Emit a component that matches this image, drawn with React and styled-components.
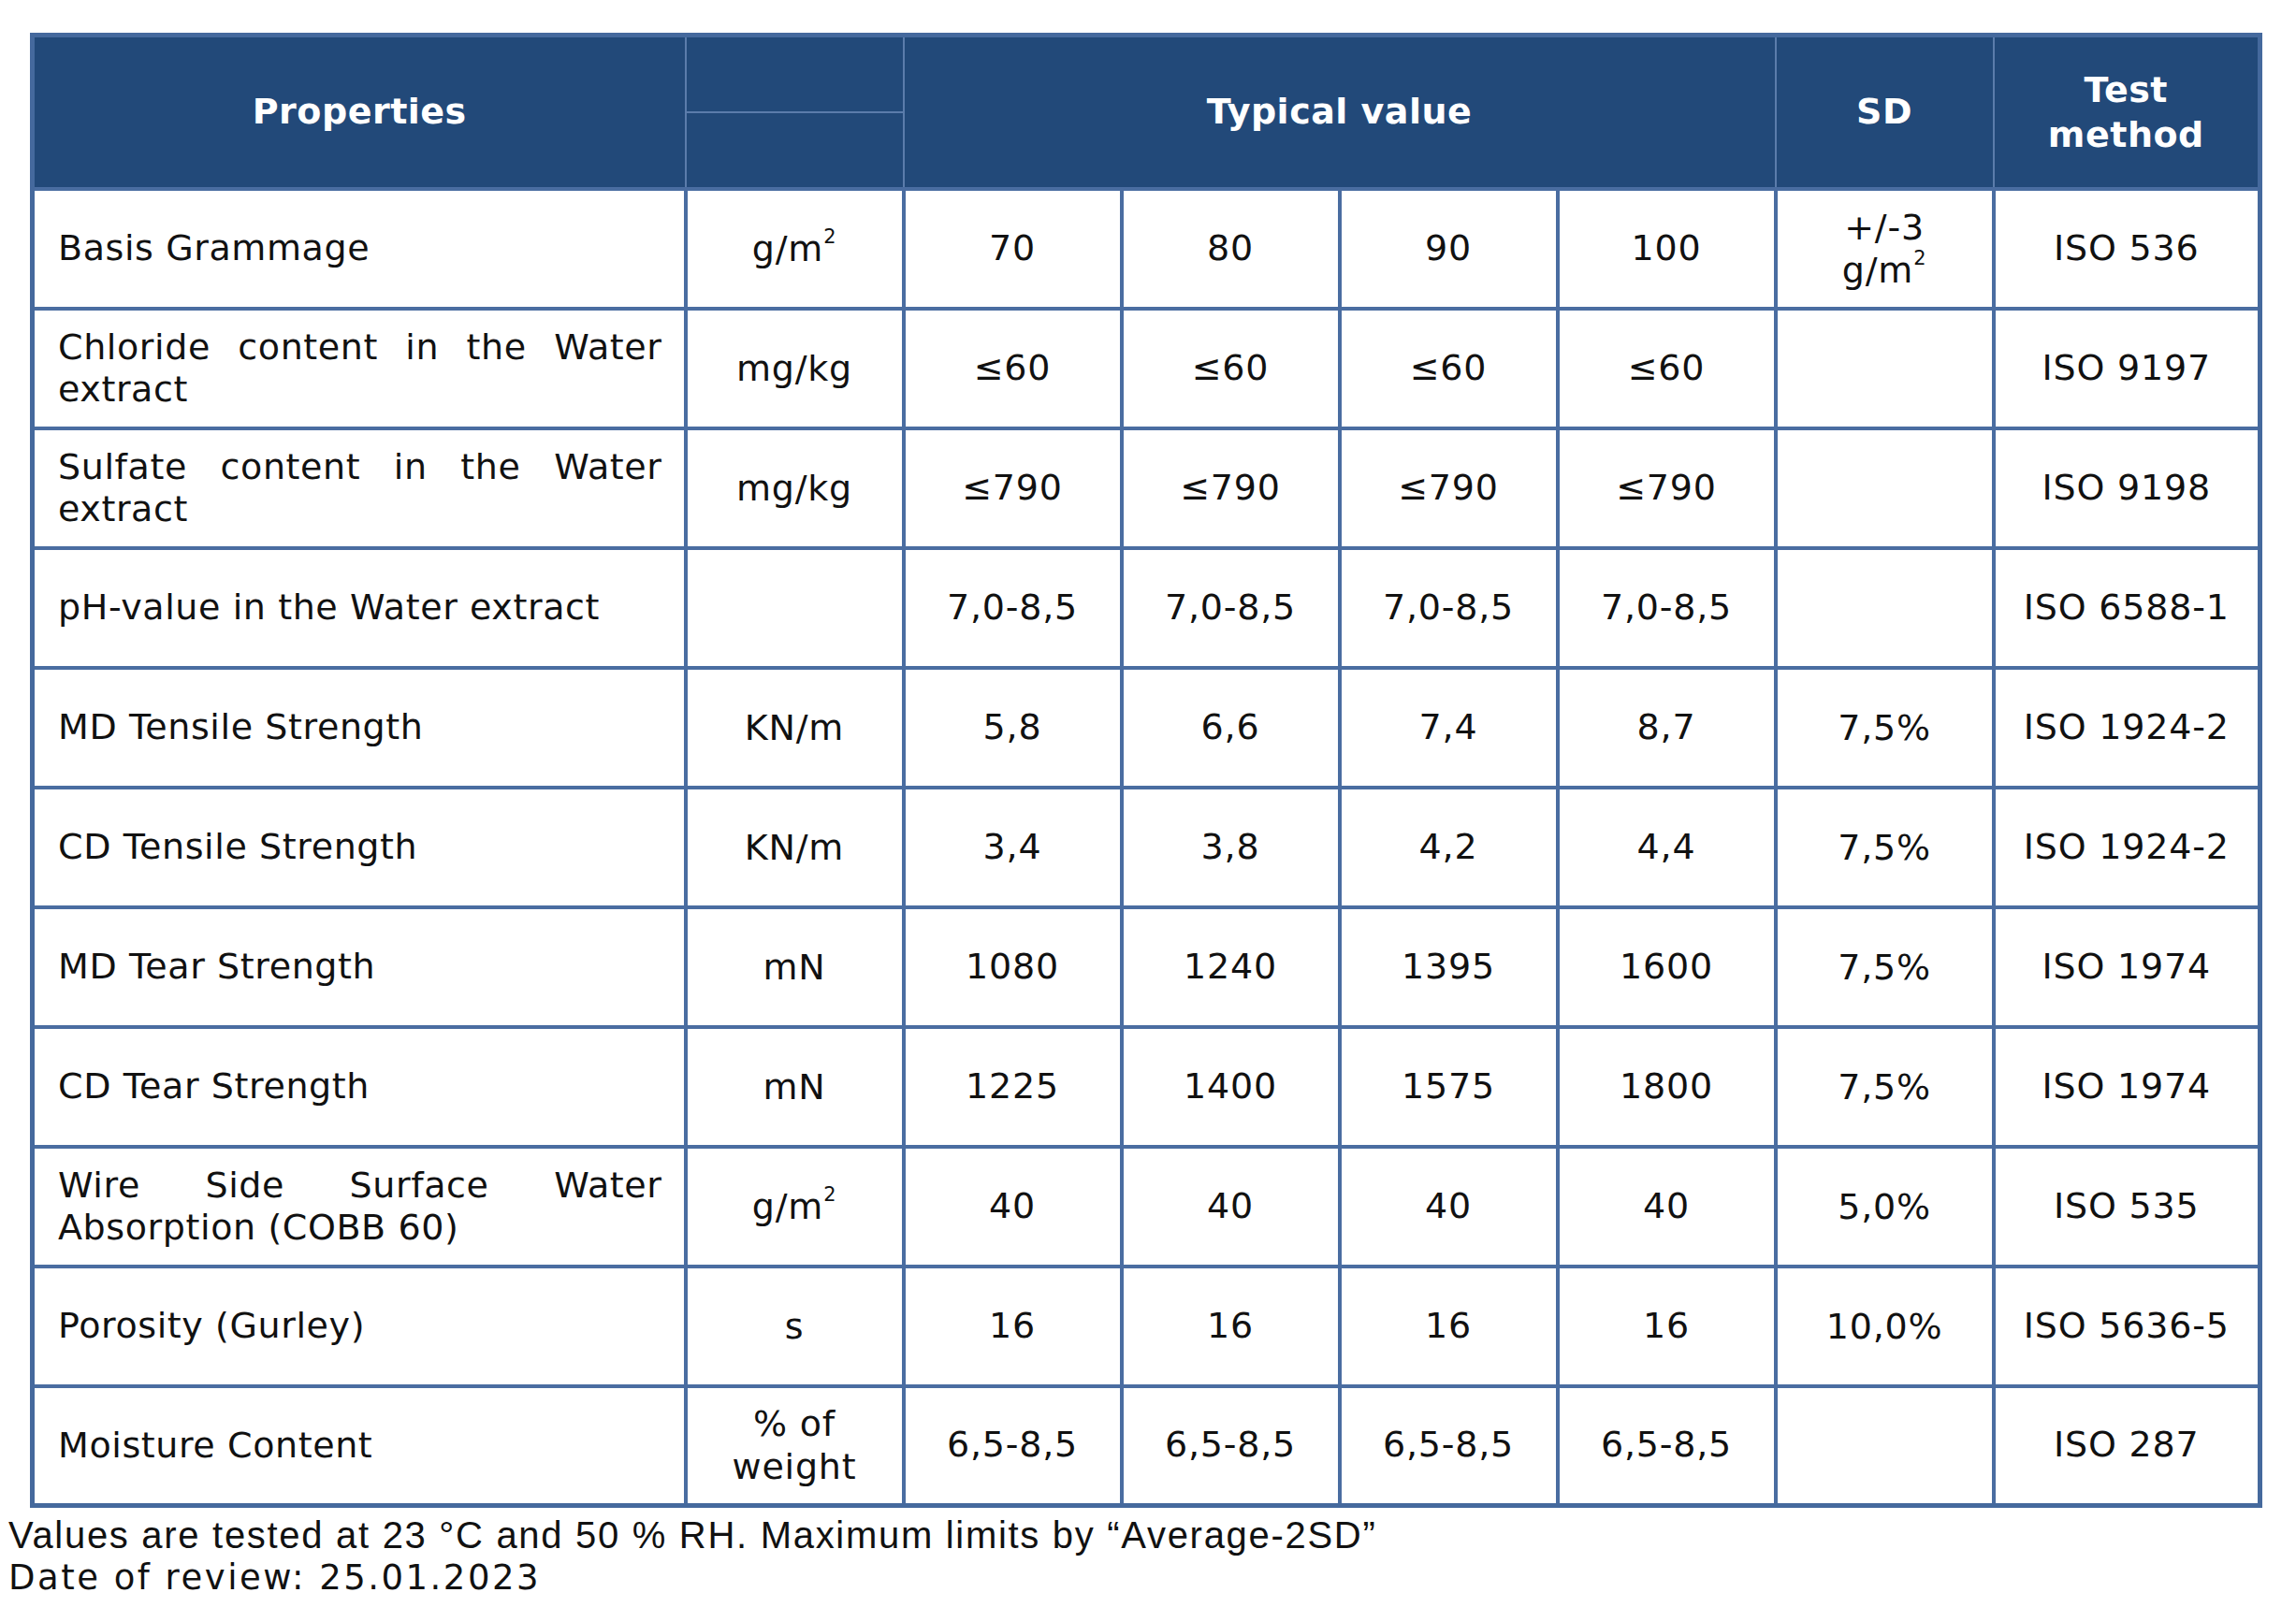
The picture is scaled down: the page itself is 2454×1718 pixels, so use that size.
import React from "react";
import styled, { createGlobalStyle } from "styled-components";

const GlobalStyle = createGlobalStyle`
  html, body {
    margin: 0;
    padding: 0;
    background: #ffffff;
  }
`;

const rows = [
  { name: "Basis Grammage", unit: <>g/m<Sup>2</Sup></>, values: ["70", "80", "90", "100"], sd: <>+/-3<br />g/m<Sup>2</Sup></>, method: "ISO 536" },
  { name: "Chloride content in the Water extract", unit: "mg/kg", values: ["≤60", "≤60", "≤60", "≤60"], sd: "", method: "ISO 9197" },
  { name: "Sulfate content in the Water extract", unit: "mg/kg", values: ["≤790", "≤790", "≤790", "≤790"], sd: "", method: "ISO 9198" },
  { name: "pH-value in the Water extract", unit: "", values: ["7,0-8,5", "7,0-8,5", "7,0-8,5", "7,0-8,5"], sd: "", method: "ISO 6588-1" },
  { name: "MD Tensile Strength", unit: "KN/m", values: ["5,8", "6,6", "7,4", "8,7"], sd: "7,5%", method: "ISO 1924-2" },
  { name: "CD Tensile Strength", unit: "KN/m", values: ["3,4", "3,8", "4,2", "4,4"], sd: "7,5%", method: "ISO 1924-2" },
  { name: "MD Tear Strength", unit: "mN", values: ["1080", "1240", "1395", "1600"], sd: "7,5%", method: "ISO 1974" },
  { name: "CD Tear Strength", unit: "mN", values: ["1225", "1400", "1575", "1800"], sd: "7,5%", method: "ISO 1974" },
  { name: "Wire Side Surface Water Absorption (COBB 60)", unit: <>g/m<Sup>2</Sup></>, values: ["40", "40", "40", "40"], sd: "5,0%", method: "ISO 535" },
  { name: "Porosity (Gurley)", unit: "s", values: ["16", "16", "16", "16"], sd: "10,0%", method: "ISO 5636-5" },
  { name: "Moisture Content", unit: <>% of<br />weight</>, values: ["6,5-8,5", "6,5-8,5", "6,5-8,5", "6,5-8,5"], sd: "", method: "ISO 287" },
];

function Sup({ children }) {
  return <SupText>{children}</SupText>;
}

export default function App() {
  return (
    <Page>
      <GlobalStyle />
      <Table>
        <colgroup>
          <col style={{ width: 698 }} />
          <col style={{ width: 233 }} />
          <col style={{ width: 233 }} />
          <col style={{ width: 233 }} />
          <col style={{ width: 233 }} />
          <col style={{ width: 233 }} />
          <col style={{ width: 233 }} />
          <col style={{ width: 285 }} />
        </colgroup>
        <thead>
          <HeadRow>
            <HeadCell rowSpan={2}>Properties</HeadCell>
            <HeadCell />
            <HeadCell rowSpan={2} colSpan={4}>Typical value</HeadCell>
            <HeadCell rowSpan={2}>SD</HeadCell>
            <HeadCell rowSpan={2} $tight>
              Test
              <br />
              method
            </HeadCell>
          </HeadRow>
          <HeadRow>
            <HeadCell />
          </HeadRow>
        </thead>
        <tbody>
          {rows.map((row, i) => (
            <BodyRow key={i}>
              <NameCell>{row.name}</NameCell>
              <Cell $tight>{row.unit}</Cell>
              {row.values.map((v, j) => (
                <Cell key={j}>{v}</Cell>
              ))}
              <Cell $tight>{row.sd}</Cell>
              <Cell>{row.method}</Cell>
            </BodyRow>
          ))}
        </tbody>
      </Table>
      <Footer>
        <Note>Values are tested at 23 °C and 50 % RH. Maximum limits by “Average-2SD”</Note>
        <Review>Date of review: 25.01.2023</Review>
      </Footer>
    </Page>
  );
}

const Page = styled.div`
  padding-top: 35px;
  font-family: "DejaVu Sans", Verdana, sans-serif;
  color: #111111;
`;

const Table = styled.table`
  margin-left: 32px;
  width: 2383px;
  table-layout: fixed;
  border-collapse: collapse;
  border: 5px solid #45699d;
`;

const HeadRow = styled.tr`
  height: 82px;
`;

const HeadCell = styled.th`
  background: #224979;
  color: #ffffff;
  font-weight: bold;
  font-size: 38px;
  letter-spacing: 0.5px;
  line-height: ${(props) => (props.$tight ? "48px" : "1.2")};
  text-align: center;
  vertical-align: middle;
  border: 2px solid #5b7cab;
  padding: 0 6px;
`;

const BodyRow = styled.tr`
  height: 128px;
`;

const Cell = styled.td`
  border: 4px solid #4a6da1;
  font-size: 38px;
  letter-spacing: 0.8px;
  line-height: ${(props) => (props.$tight ? "46px" : "1.2")};
  text-align: center;
  vertical-align: middle;
  padding: 0 4px;
  white-space: nowrap;
`;

const NameCell = styled(Cell)`
  text-align: justify;
  white-space: normal;
  letter-spacing: 0.6px;
  line-height: 45px;
  padding: 0 23px 0 25px;
`;

const SupText = styled.sup`
  font-size: 0.55em;
  line-height: 0;
  vertical-align: 0.9em;
`;

const Footer = styled.div`
  padding: 6px 0 0 9px;
`;

const Note = styled.div`
  font-family: "Liberation Sans", Arial, sans-serif;
  font-size: 40px;
  letter-spacing: 1.7px;
  line-height: 46px;
  color: #111111;
`;

const Review = styled.div`
  font-family: "DejaVu Sans", Verdana, sans-serif;
  font-size: 37px;
  line-height: 46px;
  letter-spacing: 2.5px;
  color: #111111;
`;
